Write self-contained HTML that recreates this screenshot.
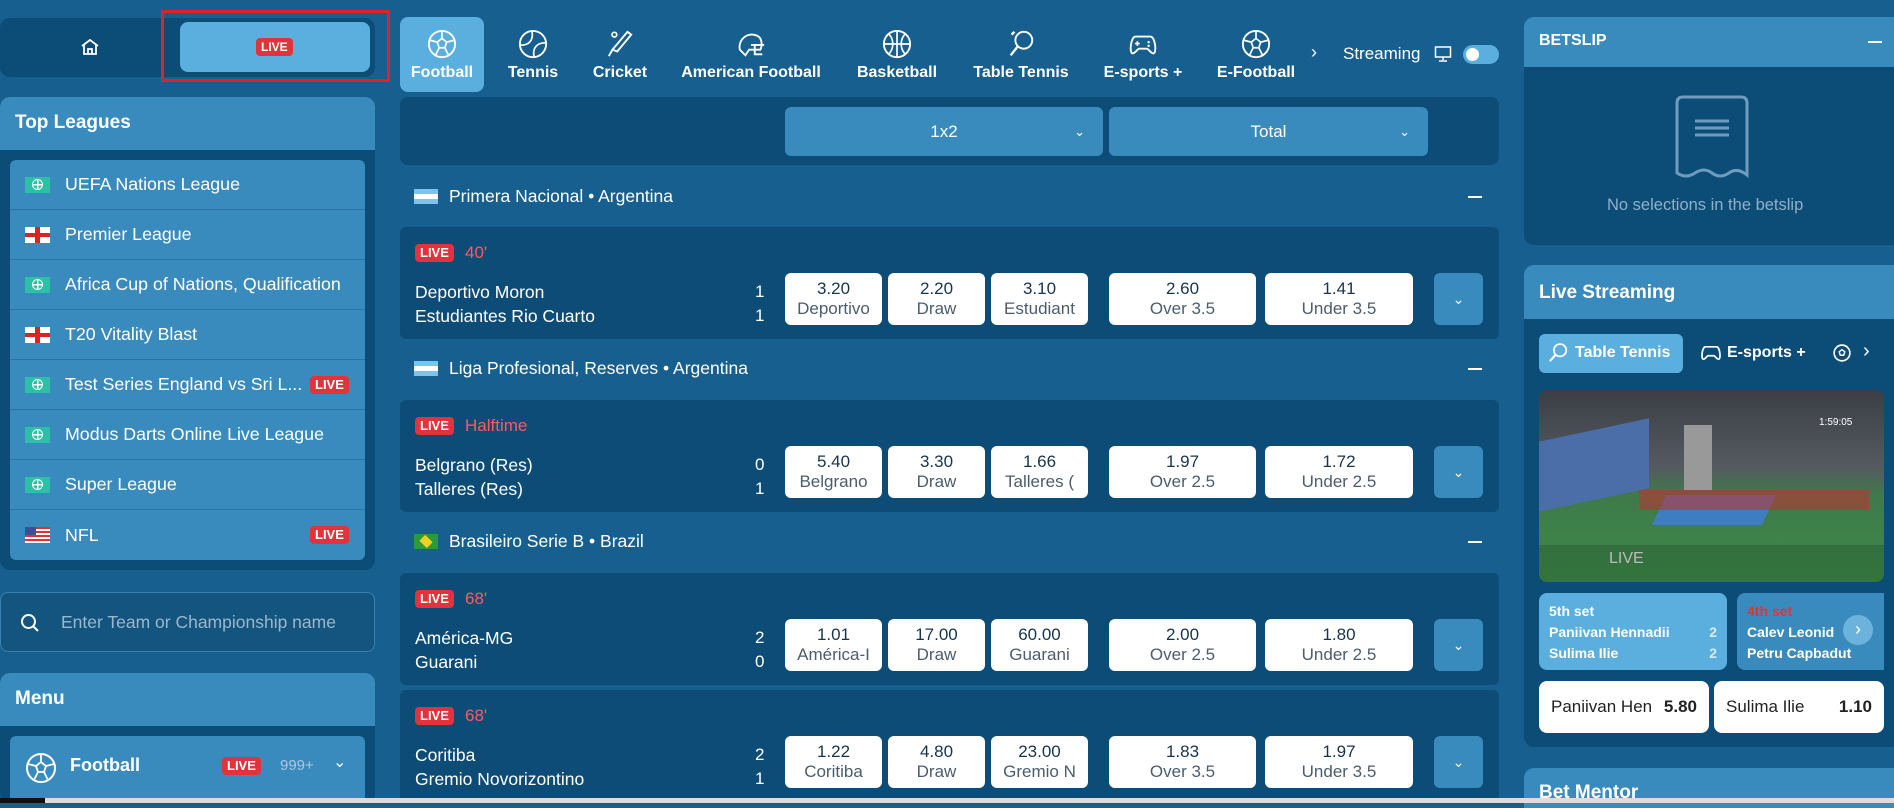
<!DOCTYPE html>
<html><head><meta charset="utf-8"><style>
*{margin:0;padding:0;box-sizing:border-box}
body{width:1894px;height:803px;overflow:hidden;background:#175f8e;font-family:"Liberation Sans",sans-serif;color:#fff;position:relative}
.a{position:absolute}
.live{background:#e0333b;color:#fff;font-weight:bold;font-size:13px;border-radius:4px;padding:2px 5px;line-height:14px}
.lg{position:absolute;left:10px;width:355px;height:50px;background:#3a8bbd;border-bottom:1px solid #2a74a5;font-size:17.8px;display:flex;align-items:center}
.lg .fl{position:absolute;left:15px;top:17px;width:25px;height:16px}
.lg span.t{position:absolute;left:55px}
.glob{background:#2dbfa8}
.glob::after{content:"";position:absolute;left:7px;top:2px;width:9px;height:9px;border:1.5px solid #fff;border-radius:50%;background:linear-gradient(#fff,#fff) center/1.5px 100% no-repeat,linear-gradient(#fff,#fff) center/100% 1.5px no-repeat}
.eng{background:#fff}
.tab{position:absolute;top:17px;height:75px;text-align:center;font-weight:bold;font-size:16px}
.tab svg{display:block;margin:12px auto 5px}
.dd{position:absolute;top:107px;height:49px;background:#3a8bbd;border-radius:6px;font-size:17px;text-align:center;line-height:49px}
.dd i{position:absolute;right:18px;top:0;font-style:normal;font-size:13px}
.lh{position:absolute;left:414px;font-size:17.5px}
.lh .f{display:inline-block;width:24px;height:15px;vertical-align:-2px;margin-right:11px}
.min{position:absolute;left:1468px;width:14px;height:2px;background:#fff}
.card{position:absolute;left:400px;width:1099px;height:112px;background:#0d4c77;border-radius:6px}
.card .lv{position:absolute;left:15px;top:17px}
.card .tm{position:absolute;left:15px;font-size:17.5px}
.card .sc{position:absolute;left:355px;font-size:17px}
.ob{position:absolute;top:46px;height:52px;background:#fff;border-radius:6px;color:#1d3b55;text-align:center;font-size:17px;line-height:20px;padding-top:6px;overflow:hidden;white-space:nowrap}
.ob b{display:block;font-weight:normal;color:#17344d}
.ob span{color:#4b5d6d}
.ex{position:absolute;left:1034px;top:46px;width:49px;height:52px;background:#3a8bbd;border-radius:6px;text-align:center;line-height:52px;font-size:14px}
</style></head><body>

<!-- LEFT -->
<div class="a" style="left:0;top:18px;width:375px;height:59px;background:#0c4d78;border-radius:10px"></div>
<svg class="a" style="left:80px;top:38px" width="20" height="18" viewBox="0 0 20 18"><path d="M2 8 L10 2 L18 8 M4 7 V16 H16 V7 M8 16 V11 H12 V16" fill="none" stroke="#fff" stroke-width="1.8"/></svg>
<div class="a" style="left:180px;top:22px;width:190px;height:50px;background:#5aafdf;border-radius:8px"></div>
<div class="a live" style="left:256px;top:38px;font-size:12px">LIVE</div>
<div class="a" style="left:161px;top:10px;width:229px;height:72px;border:3px solid #e0202a"></div>

<div class="a" style="left:0;top:97px;width:375px;height:473px;background:#0c4d78;border-radius:10px"></div>
<div class="a" style="left:0;top:97px;width:375px;height:53px;background:#3a8bbd;border-radius:10px 10px 0 0"></div>
<div class="a" style="left:15px;top:112px;font-size:19px;font-weight:bold">Top Leagues</div>
<div class="lg" style="top:160px;border-radius:6px 6px 0 0"><div class="fl glob"></div><span class="t">UEFA Nations League</span></div>
<div class="lg" style="top:210px"><div class="fl eng"><div style="position:absolute;left:10px;top:0;width:5px;height:16px;background:#d22"></div><div style="position:absolute;left:0;top:6px;width:25px;height:4px;background:#d22"></div></div><span class="t">Premier League</span></div>
<div class="lg" style="top:260px"><div class="fl glob"></div><span class="t">Africa Cup of Nations, Qualification</span></div>
<div class="lg" style="top:310px"><div class="fl eng"><div style="position:absolute;left:10px;top:0;width:5px;height:16px;background:#d22"></div><div style="position:absolute;left:0;top:6px;width:25px;height:4px;background:#d22"></div></div><span class="t">T20 Vitality Blast</span></div>
<div class="lg" style="top:360px"><div class="fl glob"></div><span class="t">Test Series England vs Sri L...</span><span class="live" style="position:absolute;left:300px">LIVE</span></div>
<div class="lg" style="top:410px"><div class="fl glob"></div><span class="t">Modus Darts Online Live League</span></div>
<div class="lg" style="top:460px"><div class="fl glob"></div><span class="t">Super League</span></div>
<div class="lg" style="top:510px;border-radius:0 0 6px 6px;border:0"><div class="fl" style="background:repeating-linear-gradient(#d33 0 2px,#fff 2px 4px)"><div style="width:11px;height:8px;background:#3c4f9a"></div></div><span class="t">NFL</span><span class="live" style="position:absolute;left:300px">LIVE</span></div>

<div class="a" style="left:0;top:592px;width:375px;height:60px;background:#13557f;border:1px solid #3a80b0;border-radius:8px"></div>
<svg class="a" style="left:20px;top:613px" width="20" height="20" viewBox="0 0 20 20"><circle cx="8.5" cy="8.5" r="6.5" fill="none" stroke="#fff" stroke-width="2"/><path d="M13 13 L18 18" stroke="#fff" stroke-width="2"/></svg>
<div class="a" style="left:61px;top:612px;font-size:17.5px;color:#9bb7cb">Enter Team or Championship name</div>

<div class="a" style="left:0;top:673px;width:375px;height:130px;background:#0c4d78;border-radius:10px"></div>
<div class="a" style="left:0;top:673px;width:375px;height:53px;background:#3a8bbd;border-radius:10px 10px 0 0"></div>
<div class="a" style="left:15px;top:688px;font-size:19px;font-weight:bold">Menu</div>
<div class="a" style="left:10px;top:736px;width:355px;height:67px;background:#3a8bbd;border-radius:6px"></div>
<svg class="a" style="left:25px;top:752px" width="32" height="32" viewBox="0 0 32 32"><circle cx="16" cy="16" r="14" fill="none" stroke="#fff" stroke-width="2"/><path d="M16 10 L21 14 L19 20 L13 20 L11 14 Z M16 2 V10 M21 14 L29 12 M19 20 L23 28 M13 20 L9 28 M11 14 L3 12" fill="none" stroke="#fff" stroke-width="1.8"/></svg>
<div class="a" style="left:70px;top:755px;font-size:18px;font-weight:bold">Football</div>
<div class="a live" style="left:222px;top:757px">LIVE</div>
<div class="a" style="left:280px;top:757px;font-size:15px;color:#a8c8de">999+</div>
<div class="a" style="left:333px;top:752px;font-size:16px">⌄</div>

<!-- MIDDLE -->
<div class="a" style="left:400px;top:17px;width:84px;height:75px;background:#5aafdf;border-radius:8px"></div>
<div class="tab" style="left:400px;width:84px"><svg width="30" height="30" viewBox="0 0 32 32"><circle cx="16" cy="16" r="14" fill="none" stroke="#fff" stroke-width="2"/><path d="M16 10 L21 14 L19 20 L13 20 L11 14 Z M16 2 V10 M21 14 L29 12 M19 20 L23 28 M13 20 L9 28 M11 14 L3 12" fill="none" stroke="#fff" stroke-width="1.8"/></svg>Football</div>
<div class="tab" style="left:503px;width:60px"><svg width="30" height="30" viewBox="0 0 32 32"><circle cx="16" cy="16" r="14" fill="none" stroke="#fff" stroke-width="2"/><path d="M6 6 C14 12 14 20 6 26 M26 6 C18 12 18 20 26 26" fill="none" stroke="#fff" stroke-width="1.8" transform="rotate(40 16 16)"/></svg>Tennis</div>
<div class="tab" style="left:585px;width:70px"><svg width="30" height="30" viewBox="0 0 32 32"><path d="M24 3 L28 6 L13 24 L8 22 Z M8 22 L4 29" fill="none" stroke="#fff" stroke-width="2"/><circle cx="10" cy="6" r="2.5" fill="none" stroke="#fff" stroke-width="1.8"/></svg>Cricket</div>
<div class="tab" style="left:676px;width:150px"><svg width="32" height="30" viewBox="0 0 32 32"><path d="M4 22 C2 10 14 2 24 8 C28 11 28 18 26 22 L14 22 L10 28 L4 22" fill="none" stroke="#fff" stroke-width="2"/><path d="M16 17 H30 M20 17 V27 H28" fill="none" stroke="#fff" stroke-width="2"/></svg>American Football</div>
<div class="tab" style="left:850px;width:94px"><svg width="30" height="30" viewBox="0 0 32 32"><circle cx="16" cy="16" r="14" fill="none" stroke="#fff" stroke-width="2"/><path d="M16 2 V30 M2 16 H30 M7 5 C13 11 13 21 7 27 M25 5 C19 11 19 21 25 27" fill="none" stroke="#fff" stroke-width="1.8"/></svg>Basketball</div>
<div class="tab" style="left:965px;width:112px"><svg width="30" height="30" viewBox="0 0 32 32"><ellipse cx="19" cy="12" rx="9" ry="9" fill="none" stroke="#fff" stroke-width="2"/><path d="M13 18 L5 28 M6 6 L9 3" stroke="#fff" stroke-width="2.5"/></svg>Table Tennis</div>
<div class="tab" style="left:1100px;width:86px"><svg width="32" height="30" viewBox="0 0 32 32"><path d="M8 8 H24 C29 8 31 26 27 26 C24 26 22 21 20 21 H12 C10 21 8 26 5 26 C1 26 3 8 8 8 Z" fill="none" stroke="#fff" stroke-width="2"/><path d="M10 13 V18 M7.5 15.5 H12.5" stroke="#fff" stroke-width="1.8"/><circle cx="22" cy="14" r="1.3" fill="#fff"/><circle cx="22" cy="18" r="1.3" fill="#fff"/></svg>E-sports +</div>
<div class="tab" style="left:1210px;width:92px"><svg width="30" height="30" viewBox="0 0 32 32"><circle cx="16" cy="16" r="14" fill="none" stroke="#fff" stroke-width="2"/><path d="M16 10 L21 14 L19 20 L13 20 L11 14 Z M16 2 V10 M21 14 L29 12 M19 20 L23 28 M13 20 L9 28 M11 14 L3 12" fill="none" stroke="#fff" stroke-width="1.8"/></svg>E-Football</div>
<div class="a" style="left:1311px;top:42px;font-size:18px">›</div>
<div class="a" style="left:1343px;top:44px;font-size:17px">Streaming</div>
<svg class="a" style="left:1434px;top:45px" width="18" height="18" viewBox="0 0 18 18"><rect x="1.5" y="2" width="15" height="10" fill="none" stroke="#fff" stroke-width="1.5"/><path d="M9 12 V15 M5 16 H13" stroke="#fff" stroke-width="1.5"/></svg>
<div class="a" style="left:1463px;top:45px;width:36px;height:19px;background:#5aafdf;border-radius:10px"><div style="position:absolute;left:3px;top:3px;width:13px;height:13px;border-radius:50%;background:#fff"></div></div>

<div class="a" style="left:400px;top:97px;width:1099px;height:68px;background:#0d4c77;border-radius:8px"></div>
<div class="dd" style="left:785px;width:318px">1x2<i>⌄</i></div>
<div class="dd" style="left:1109px;width:319px">Total<i>⌄</i></div>

<!-- league 1 -->
<div class="lh" style="top:186px"><span class="f" style="background:linear-gradient(#7cc3ee 33%,#fff 33% 66%,#7cc3ee 66%)"></span>Primera Nacional • Argentina</div>
<div class="min" style="top:196px"></div>
<div class="card" style="top:227px">
 <span class="lv live">LIVE</span><span style="position:absolute;left:65px;top:16px;color:#ff5a5a;font-size:17px">40'</span>
 <div class="tm" style="top:55px">Deportivo Moron</div><div class="tm" style="top:79px">Estudiantes Rio Cuarto</div>
 <div class="sc" style="top:55px">1</div><div class="sc" style="top:79px">1</div>
 <div class="ob" style="left:385px;width:97px"><b>3.20</b><span>Deportivo</span></div>
 <div class="ob" style="left:488px;width:97px"><b>2.20</b><span>Draw</span></div>
 <div class="ob" style="left:591px;width:97px"><b>3.10</b><span>Estudiant</span></div>
 <div class="ob" style="left:709px;width:147px"><b>2.60</b><span>Over 3.5</span></div>
 <div class="ob" style="left:865px;width:148px"><b>1.41</b><span>Under 3.5</span></div>
 <div class="ex">⌄</div>
</div>
<!-- league 2 -->
<div class="lh" style="top:358px"><span class="f" style="background:linear-gradient(#7cc3ee 33%,#fff 33% 66%,#7cc3ee 66%)"></span>Liga Profesional, Reserves • Argentina</div>
<div class="min" style="top:368px"></div>
<div class="card" style="top:400px">
 <span class="lv live">LIVE</span><span style="position:absolute;left:65px;top:16px;color:#ff5a5a;font-size:17px">Halftime</span>
 <div class="tm" style="top:55px">Belgrano (Res)</div><div class="tm" style="top:79px">Talleres (Res)</div>
 <div class="sc" style="top:55px">0</div><div class="sc" style="top:79px">1</div>
 <div class="ob" style="left:385px;width:97px"><b>5.40</b><span>Belgrano</span></div>
 <div class="ob" style="left:488px;width:97px"><b>3.30</b><span>Draw</span></div>
 <div class="ob" style="left:591px;width:97px"><b>1.66</b><span>Talleres (</span></div>
 <div class="ob" style="left:709px;width:147px"><b>1.97</b><span>Over 2.5</span></div>
 <div class="ob" style="left:865px;width:148px"><b>1.72</b><span>Under 2.5</span></div>
 <div class="ex">⌄</div>
</div>
<!-- league 3 -->
<div class="lh" style="top:531px"><span class="f" style="background:#2a9a3a;position:relative"><span style="position:absolute;left:5px;top:2px;width:14px;height:11px;background:#f3d023;transform:rotate(45deg) scale(.75)"></span></span>Brasileiro Serie B • Brazil</div>
<div class="min" style="top:541px"></div>
<div class="card" style="top:573px">
 <span class="lv live">LIVE</span><span style="position:absolute;left:65px;top:16px;color:#ff5a5a;font-size:17px">68'</span>
 <div class="tm" style="top:55px">América-MG</div><div class="tm" style="top:79px">Guarani</div>
 <div class="sc" style="top:55px">2</div><div class="sc" style="top:79px">0</div>
 <div class="ob" style="left:385px;width:97px"><b>1.01</b><span>América-I</span></div>
 <div class="ob" style="left:488px;width:97px"><b>17.00</b><span>Draw</span></div>
 <div class="ob" style="left:591px;width:97px"><b>60.00</b><span>Guarani</span></div>
 <div class="ob" style="left:709px;width:147px"><b>2.00</b><span>Over 2.5</span></div>
 <div class="ob" style="left:865px;width:148px"><b>1.80</b><span>Under 2.5</span></div>
 <div class="ex">⌄</div>
</div>
<div class="card" style="top:690px;height:113px">
 <span class="lv live">LIVE</span><span style="position:absolute;left:65px;top:16px;color:#ff5a5a;font-size:17px">68'</span>
 <div class="tm" style="top:55px">Coritiba</div><div class="tm" style="top:79px">Gremio Novorizontino</div>
 <div class="sc" style="top:55px">2</div><div class="sc" style="top:79px">1</div>
 <div class="ob" style="left:385px;width:97px"><b>1.22</b><span>Coritiba</span></div>
 <div class="ob" style="left:488px;width:97px"><b>4.80</b><span>Draw</span></div>
 <div class="ob" style="left:591px;width:97px"><b>23.00</b><span>Gremio N</span></div>
 <div class="ob" style="left:709px;width:147px"><b>1.83</b><span>Over 3.5</span></div>
 <div class="ob" style="left:865px;width:148px"><b>1.97</b><span>Under 3.5</span></div>
 <div class="ex">⌄</div>
</div>

<!-- RIGHT -->
<div class="a" style="left:1524px;top:17px;width:370px;height:228px;background:#0c4d78;border-radius:10px 0 0 10px"></div>
<div class="a" style="left:1524px;top:17px;width:370px;height:50px;background:#3a8bbd;border-radius:10px 0 0 0"></div>
<div class="a" style="left:1539px;top:32px;font-size:16px;font-weight:bold">BETSLIP</div>
<div class="a" style="left:1868px;top:41px;width:14px;height:2px;background:#fff"></div>
<svg class="a" style="left:1673px;top:95px" width="78" height="84" viewBox="0 0 78 84"><path d="M4 8 Q4 2 10 2 H68 Q74 2 74 8 V80 Q64 72 56 78 Q47 84 39 78 Q31 72 22 78 Q13 84 4 78 Z" fill="none" stroke="#6f9cbd" stroke-width="3"/><path d="M22 26 H56 M22 33 H56 M22 40 H56" stroke="#6f9cbd" stroke-width="3"/></svg>
<div class="a" style="left:1607px;top:196px;font-size:16.5px;color:#8fb0c8">No selections in the betslip</div>

<div class="a" style="left:1524px;top:265px;width:370px;height:482px;background:#0c4d78;border-radius:10px 0 0 10px"></div>
<div class="a" style="left:1524px;top:265px;width:370px;height:54px;background:#3a8bbd;border-radius:10px 0 0 0"></div>
<div class="a" style="left:1539px;top:282px;font-size:19px;font-weight:bold">Live Streaming</div>
<div class="a" style="left:1539px;top:334px;width:144px;height:39px;background:#5aafdf;border-radius:6px"></div>
<svg class="a" style="left:1547px;top:342px" width="22" height="22" viewBox="0 0 32 32"><ellipse cx="19" cy="12" rx="9" ry="9" fill="none" stroke="#fff" stroke-width="2.5"/><path d="M13 18 L4 28" stroke="#fff" stroke-width="3"/></svg>
<div class="a" style="left:1575px;top:344px;font-size:16px;font-weight:bold">Table Tennis</div>
<svg class="a" style="left:1700px;top:344px" width="22" height="18" viewBox="0 0 32 26"><path d="M8 4 H24 C29 4 31 22 27 22 C24 22 22 17 20 17 H12 C10 17 8 22 5 22 C1 22 3 4 8 4 Z" fill="none" stroke="#fff" stroke-width="2.5"/></svg>
<div class="a" style="left:1727px;top:344px;font-size:16px;font-weight:bold">E-sports +</div>
<svg class="a" style="left:1833px;top:344px" width="18" height="18" viewBox="0 0 32 32"><circle cx="16" cy="16" r="14" fill="none" stroke="#fff" stroke-width="3"/><path d="M16 10 L21 14 L19 20 L13 20 L11 14 Z" fill="none" stroke="#fff" stroke-width="2.5"/></svg>
<div class="a" style="left:1863px;top:340px;font-size:20px">›</div>

<div class="a" style="left:1539px;top:390px;width:345px;height:192px;border-radius:8px;overflow:hidden;background:linear-gradient(#3b3f45 0%,#555a60 40%,#3f7a4a 55%,#3c8a48 100%)">
 <div style="position:absolute;left:0;top:40px;width:110px;height:70px;background:#4c6ea8;transform:skewY(-12deg)"></div>
 <div style="position:absolute;left:120px;top:105px;width:110px;height:30px;background:#3e7dc0;transform:skewX(-25deg)"></div>
 <div style="position:absolute;left:100px;top:100px;width:230px;height:20px;background:#b33;opacity:.6"></div>
 <div style="position:absolute;left:145px;top:35px;width:28px;height:65px;background:#999"></div>
 <div style="position:absolute;left:280px;top:27px;font-size:10px">1:59:05</div>
 <div style="position:absolute;left:70px;top:160px;font-size:16px;color:#ddd">LIVE</div>
 <div style="position:absolute;left:0;top:155px;width:345px;height:37px;background:rgba(0,0,0,.15)"></div>
</div>
<div class="a" style="left:1539px;top:593px;width:188px;height:77px;background:#5aafdf;border-radius:8px;font-size:14px;font-weight:bold;padding:8px 0 0 10px;line-height:21px">5th set<br>Paniivan Hennadii<br>Sulima Ilie<span style="position:absolute;right:10px;top:29px;color:#d8ecf8">2</span><span style="position:absolute;right:10px;top:50px;color:#d8ecf8">2</span></div>
<div class="a" style="left:1737px;top:593px;width:147px;height:77px;background:#3a8bbd;border-radius:8px 0 0 8px;font-size:14px;font-weight:bold;padding:8px 0 0 10px;line-height:21px;white-space:nowrap;overflow:hidden"><span style="color:#e0333b">4th set</span><br>Calev Leonid<br>Petru Capbadut</div>
<div class="a" style="left:1843px;top:615px;width:30px;height:30px;border-radius:50%;background:#6bb3dc;text-align:center;line-height:28px;font-size:18px">›</div>
<div class="a" style="left:1539px;top:681px;width:170px;height:52px;background:#fff;border-radius:8px;color:#222;font-size:17px;line-height:52px;padding-left:12px">Paniivan Hen<b style="position:absolute;right:12px;font-weight:bold">5.80</b></div>
<div class="a" style="left:1714px;top:681px;width:170px;height:52px;background:#fff;border-radius:8px;color:#222;font-size:17px;line-height:52px;padding-left:12px">Sulima Ilie<b style="position:absolute;right:12px;font-weight:bold">1.10</b></div>

<div class="a" style="left:1524px;top:768px;width:370px;height:40px;background:#3a8bbd;border-radius:10px 0 0 0"></div>
<div class="a" style="left:1539px;top:782px;font-size:19px;font-weight:bold">Bet Mentor</div>

<div class="a" style="left:0;top:798px;width:1894px;height:5px;background:#dcdcdc"></div>
<div class="a" style="left:0;top:798px;width:45px;height:5px;background:#111"></div>
</body></html>
